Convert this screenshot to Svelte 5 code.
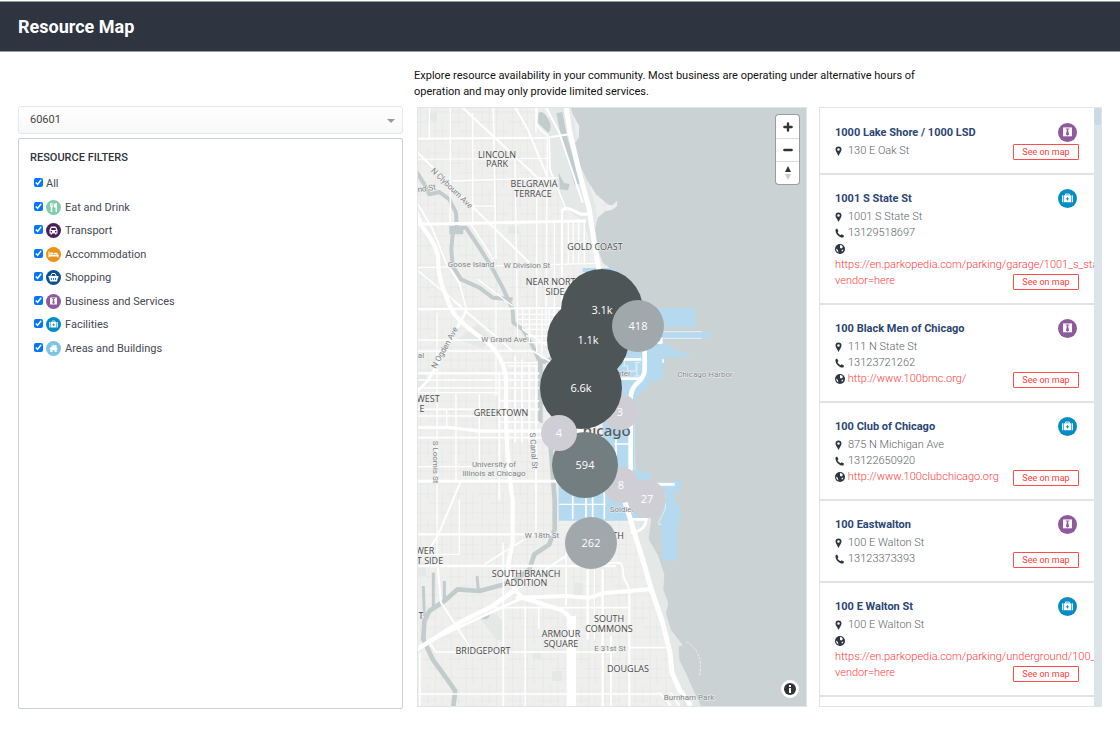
<script>
  let zip = $state('60601');

  let filters = $state([
    { name: 'All', checked: true },
    { name: 'Eat and Drink', icon: 'food', checked: true },
    { name: 'Transport', icon: 'transport', checked: true },
    { name: 'Accommodation', icon: 'bed', checked: true },
    { name: 'Shopping', icon: 'shopping', checked: true },
    { name: 'Business and Services', icon: 'business', checked: true },
    { name: 'Facilities', icon: 'facilities', checked: true },
    { name: 'Areas and Buildings', icon: 'areas', checked: true }
  ]);

  const iconColors = {
    food: '#7fcdaa',
    transport: '#4a1e5a',
    bed: '#ea9314',
    shopping: '#0c4f97',
    business: '#8d5a9b',
    facilities: '#068cc4',
    areas: '#7fc4e3'
  };

  const places = [
    { name: '1000 Lake Shore / 1000 LSD', icon: 'business', address: '130 E Oak St' },
    {
      name: '1001 S State St',
      icon: 'facilities',
      address: '1001 S State St',
      phone: '13129518697',
      url: 'https://en.parkopedia.com/parking/garage/1001_s_state_st?vendor=here'
    },
    {
      name: '100 Black Men of Chicago',
      icon: 'business',
      address: '111 N State St',
      phone: '13123721262',
      url: 'http://www.100bmc.org/'
    },
    {
      name: '100 Club of Chicago',
      icon: 'facilities',
      address: '875 N Michigan Ave',
      phone: '13122650920',
      url: 'http://www.100clubchicago.org'
    },
    { name: '100 Eastwalton', icon: 'business', address: '100 E Walton St', phone: '13123373393' },
    {
      name: '100 E Walton St',
      icon: 'facilities',
      address: '100 E Walton St',
      url: 'https://en.parkopedia.com/parking/underground/100_e_walton_st?vendor=here'
    }
  ];

  const clusters = [
    { x: 204, y: 306, r: 18, label: '3', color: '#cfced5' },
    { x: 205, y: 379, r: 18, label: '8', color: '#cfced5' },
    { x: 231, y: 393, r: 19, label: '27', color: '#cfced5' },
    { x: 186, y: 204, r: 41, label: '3.1k', color: '#4d5557' },
    { x: 172, y: 234, r: 41, label: '1.1k', color: '#4d5557' },
    { x: 165, y: 282, r: 41, label: '6.6k', color: '#4d5557' },
    { x: 222, y: 220, r: 26, label: '418', color: '#a1a8ab' },
    { x: 175, y: 437, r: 26, label: '262', color: '#a1a8ab' },
    { x: 169, y: 359, r: 33, label: '594', color: '#737e81' },
    { x: 143, y: 327, r: 18, label: '4', color: '#cfced5' }
  ];

  const areas = [
    [81, 52, 'LINCOLN'], [81, 61, 'PARK'],
    [118, 81, 'BELGRAVIA'], [117, 91, 'TERRACE'],
    [179, 144, 'GOLD COAST'],
    [138, 179, 'NEAR NORTH'], [139, 189, 'SIDE'],
    [12, 296, 'WEST'], [6, 306, 'E'],
    [85, 310, 'GREEKTOWN'],
    [9, 448, 'WER'], [14, 458, 'T SIDE'],
    [110, 471, 'SOUTH BRANCH'], [110, 480, 'ADDITION'],
    [5, 513, 'T'], [202, 433, 'TH'],
    [145, 531, 'ARMOUR'], [145, 541, 'SQUARE'],
    [193, 516, 'SOUTH'], [193, 526, 'COMMONS'],
    [67, 548, 'BRIDGEPORT'], [212, 566, 'DOUGLAS']
  ];

  // x, y, text, rotation
  const streets = [
    [34, 84, 'N Clybourn Ave', 44],
    [11, 85, 'nd St', -8],
    [55, 161, 'Goose Island', 0],
    [111, 162, 'W Division St', 0],
    [31, 243, 'N Ogden Ave', -61],
    [88, 236, 'W Grand Ave', 0],
    [5, 252, 'al', 0],
    [17, 356, 'S Loomis St', 90],
    [115, 345, 'S Canal St', 86],
    [78, 361, 'University of', 0],
    [78, 370, 'Illinois at Chicago', 0],
    [126, 432, 'W 18th St', 0],
    [194, 545, 'E 31st St', 0],
    [203, 270, 'Center', 0],
    [206, 406, 'Soldier', 0],
    [289, 271, 'Chicago Harbor', 0],
    [273, 594, 'Burnham Park', 0]
  ];

  // [width, path]
  const roads = [
    [6, 'M0 98L390 95L460 85'], [3, 'M0 160L400 157'], [4, 'M110 225L425 215'],
    [9, 'M0 355L510 345'], [4, 'M0 485L545 472'], [4, 'M170 300H240'],
    [4, 'M40 0V96'], [5, 'M103 0V353'], [4, 'M170 20V353'], [5, 'M232 0L240 460'],
    [4, 'M297 160L305 700'], [4, 'M360 0V80M362 215V740'], [4, 'M394 95L390 650'],
    [4, 'M415 350V620'], [6, 'M438 310V600'], [4, 'M457 350V475M472 350V475M488 350V475M505 350V475'],
    [6, 'M135 0L365 215L425 230'], [6, 'M0 135L340 470'],
    [6, 'M295 0L335 70L395 215'], [6, 'M388 0L430 80L500 290'], [5, 'M362 0V60L400 95L402 190L450 310'],
    [15, 'M450 0L462 80L490 200L520 310L530 380L548 490L570 600'],
    [9, 'M438 318Q440 302 465 310L495 325H520'],
    [13, 'M0 320L20 365Q70 425 66 470Q68 520 90 570Q100 600 115 625Q150 665 210 705Q265 755 270 820V950Q275 1080 290 1182V1310L276 1375Q285 1450 320 1475L430 1510Q465 1525 466 1560'],
    [5, 'M0 285L50 370L90 470L130 530L152 612'],
    [4, 'M0 490L135 600'], [5, 'M165 355L232 460'], [4, 'M185 520L290 600'],
    [8, 'M152 612L85 740L35 825L0 860'], [5, 'M110 582L290 735'],
    [6, 'M0 610L440 606'], [4, 'M240 582V870'], [5, 'M0 702H240'], [5, 'M0 735H350'],
    [7, 'M0 802H370'], [4, 'M0 822H370'], [5, 'M0 846H370'], [4, 'M0 860H250'],
    [5, 'M0 910H370'], [4, 'M0 930H270'], [10, 'M0 965L100 965L190 975H500'],
    [5, 'M0 995H400'], [4, 'M0 1082H270'], [9, 'M0 1126H560'],
    [4, 'M63 620V1380'], [4, 'M120 865V1125'], [4, 'M190 865V1125'], [4, 'M92 910V965'],
    [5, 'M250 800V1182M297 750V1010M318 760V1010M340 770V1010M360 780V1280'],
    [4, 'M250 770H365M275 780H365M250 885H370M250 948H370'],
    [4, 'M305 625H420M305 640H425M310 655H430M320 670H430M330 690H430M335 710H420'],
    [4, 'M320 610V670M340 610V710M378 610V750M400 610V750M415 610V750'],
    [5, 'M410 730L320 670M350 735L410 770'],
    [6, 'M135 1125L65 1290L30 1345'], [7, 'M0 1285H420'], [8, 'M0 1380H600'],
    [4, 'M0 1345H130V1182'], [5, 'M205 1375L325 1300'], [6, 'M450 1350L300 1450L200 1520'],
    [6, 'M65 1380L75 1490L160 1620'], [5, 'M262 1310V1800M328 1500V1800'],
    [14, 'M0 1632L130 1550L230 1500L300 1450'], [8, 'M30 1610L320 1475'],
    [12, 'M300 1475L450 1470L520 1475L560 1462L700 1450'],
    [5, 'M230 1505H640'], [5, 'M40 1610L60 1638H600M640 1625H760'],
    [5, 'M0 1764H730'], [28, 'M466 1530V1800'], [5, 'M12 1640V1800'],
    [5, 'M368 1500V1570M450 1340V1500'], [7, 'M515 1390V1600'], [4, 'M535 1390V1600'],
    [7, 'M560 1390V1800'], [6, 'M585 1590V1800'], [6, 'M570 1370H610Q622 1375 622 1410L640 1450V1800'],
    [5, 'M730 1760L765 1800M765 1760L790 1800'],
    [15, 'M625 1182L680 1360L706 1450L740 1550L762 1640L768 1700L790 1750L825 1800'],
    [8, 'M640 1240H695M690 1240Q690 1275 645 1280'],
    [14, 'M686 730V790Q686 815 660 835Q644 850 644 880V1085L625 1182'],
    [8, 'M600 760H676M600 818H676M736 695V710H715'],
    [5, 'M595 1014H644M600 1000V1050M741 760V770'],
    [9, 'M720 1135H776'],
    [5, 'M470 1120V1240M510 1120V1240M530 1120V1240M565 1120V1240'],
    [4, 'M430 1195H570']
  ];
</script>

{#snippet categoryIcon(kind)}
  <svg class="category" viewBox="0 0 30 30" aria-hidden="true">
    <circle cx="15" cy="15" r="15" fill={iconColors[kind]} />
    {#if kind === 'food'}
      <path fill="#fff" d="M8 6h1.500v6h1V6h1.500v6h1V6H14.500v7l-2 2v9h-3v-9L8 13zM16 9q0-3 6-3v18h-3v-9h-3z" />
    {:else if kind === 'transport'}
      <path fill="#fff" fill-rule="evenodd" d="M11 7h8l2 2 2 5v7h-2v2h-3v-2h-6v2H9v-2H7v-7l2-5zM11 10l-1 4h10l-1-4zM9 16v3h3v-3zM18 16v3h3v-3z" />
    {:else if kind === 'bed'}
      <path fill="#fff" d="M5 9h2v6H25v6h-2v-2H7v2H5zM8.500 11h4q2 0 2 3h-6zM15.500 11.500h5q3 0 3.500 2.500h-8.500z" />
    {:else if kind === 'shopping'}
      <path fill="none" stroke="#fff" stroke-width="2" d="M9 13L12 7h6l3 6" />
      <path fill="#fff" fill-rule="evenodd" d="M5 12h20v3h-1l-2 8H8l-2-8H5zM10 16v4h1.500v-4zM14 16v4h1.500v-4zM18 16v4h1.500v-4z" />
    {:else if kind === 'business'}
      <path fill="#fff" d="M8 7h14v14H8z" />
      <path fill={iconColors[kind]} d="M12 8.500h6v1.500h-1.500l-.5 2 1.500 6L15 20l-2.500-2L14 12l-.5-2H12z" />
    {:else if kind === 'facilities'}
      <path fill="none" stroke="#fff" stroke-width="1.500" d="M12 10V8h6v2" />
      <path fill="#fff" d="M6.500 10H8v11H6.500zM9 10h12v11H9zM22 10h1.500v11H22z" />
      <path stroke={iconColors[kind]} stroke-width="1.500" d="M15 13v5M12.500 15.500h5" />
    {:else}
      <path fill="#fff" d="M15 7l3 3V8h3v5l3 3h-2.500v6H17v-4h-4v4H8.500v-6H6z" />
    {/if}
  </svg>
{/snippet}

<header>
  <h1>Resource Map</h1>
</header>

<main>
  <p class="intro">
    Explore resource availability in your community. Most business are operating under alternative hours of operation and may only provide limited services.
  </p>

  <section class="sidebar">
    <div class="zip">
      <select bind:value={zip} aria-label="Zip code">
        <option>60601</option>
        <option>60602</option>
      </select>
    </div>
    <div class="filters">
      <h2>RESOURCE FILTERS</h2>
      <div class="filter-list">
        {#each filters as filter}
          <label>
            <input type="checkbox" bind:checked={filter.checked} />
            {#if filter.icon}{@render categoryIcon(filter.icon)}{/if}
            <span>{filter.name}</span>
          </label>
        {/each}
      </div>
    </div>
  </section>

  <section class="map" aria-label="Map">
    <svg class="layer" viewBox="6 6 1164 1794" preserveAspectRatio="xMinYMin slice" aria-hidden="true">
      <defs>
        <pattern id="blocks" width="92" height="124" patternUnits="userSpaceOnUse">
          <path fill="none" stroke="#e3e6e6" stroke-width="2" d="M14 0V124M36 0V62M58 0V124M78 40V124M0 18H92M0 48H58M36 76H92M0 104H92" />
        </pattern>
      </defs>
      <rect width="1180" height="1810" fill="#efefee" />
      <rect width="1180" height="1810" fill="url(#blocks)" />

      <!-- parks -->
      <g fill="#e4e8e7">
        <path d="M400 0H460L540 310L550 480L500 345L440 300L400 190Z" />
        <path d="M277 360h32v24h-32zM35 20h28v24H35zM125 700l60-45 50 50-40 20zM6 800l20 5 15 30-35 15zM190 1535l40-20 30 30v60l-20-5zM408 1695h30v30h-30zM350 1640h25v20h-25zM475 1430h25v40h-25zM0 1370h30v40H0z" />
        <path d="M640 1240L700 1235L705 1300L745 1410L770 1560L800 1620L830 1700L860 1800H800L760 1640L700 1430Z" />
      </g>

      <!-- lake -->
      <path fill="#cad2d3" d="M462 0L470 25L490 60L488 95L475 115L490 175L515 225L540 265L575 295L588 298L604 284L603 300Q590 315 570 314L545 335L538 370L545 430L560 470L600 500L640 560L655 700V850L658 1090L705 1242L698 1300L725 1347L745 1407L742 1452L757 1492L750 1522L765 1572L800 1617L788 1622L790 1662L810 1702L832 1752L860 1810H1180V0Z" />
      <path fill="none" stroke="#eef0f0" stroke-width="3" stroke-dasharray="8 4" d="M812 1608Q865 1640 850 1710" />

      <!-- river, lagoons and slips -->
      <g fill="none" stroke="#c3cccd" stroke-width="12" stroke-linejoin="round">
        <path d="M0 195L25 235L40 265L70 258L100 280L120 320L122 360L110 385L106 430L110 480L135 520L190 545L230 575L290 580" />
        <path d="M120 365H150L190 425L225 480L260 545L290 610L292 650L320 670L350 720L368 760L385 768L410 755" />
        <path stroke-width="14" d="M373 765V950M404 1020L416 1182V1270L400 1315L355 1345L340 1390L300 1420L255 1438L190 1455L125 1450L85 1485L40 1515L25 1545L22 1600L50 1660L90 1715L118 1755L112 1800" />
        <path stroke-width="9" d="M22 1440L25 1530M52 1400V1510M85 1425V1490M183 1410L187 1452" />
        <path stroke-width="18" d="M430 20L445 95L485 235" />
      </g>
      <path fill="#c3cccd" d="M100 360h42v25h-42zM368 20Q385 10 402 50Q406 75 396 80L365 50ZM428 200l15 30 18 5-5 18-24-3zM195 1530q15-12 27-2-6 16-27 10z" />

      <!-- highlighted zip area -->
      <g fill="#b5daf0">
        <path d="M500 486H600V498H500ZM428 1120V1244H655L700 1235L660 1182L700 1125Q712 1100 695 1097L656 1092V890Q665 890 660 870L690 850Q700 840 702 824H740L744 755L836 750L770 730V718H742V700H858V698L888 692V680L858 678H742V662H838V607H730L660 630L560 800V1120Z" />
        <path d="M720 1130H770L775 1122H792L795 1150L785 1160H770L778 1182L792 1205V1245L783 1260V1365L740 1362L738 1300L732 1260L745 1182Z" />
      </g>
      <path fill="#c5d8df" d="M773 1165l6 0-3 12 4 16-7-12z" />
      <path fill="none" stroke="#e7eff2" stroke-width="3" d="M742 677H858M742 697H858M620 780h15v15h25v-20M625 750v30M663 770v40M655 770h18M655 810h18M748 1164v45l-20 40v6h8" />

      <g fill="none" stroke-linejoin="round">
        {#each roads as [width, d]}
          <path {d} stroke="#fff" stroke-width={width} />
        {/each}
      </g>
    </svg>

    <svg class="layer" viewBox="2 2 388 598" preserveAspectRatio="xMinYMin slice">
      <g class="street">
        {#each streets as [x, y, text, angle]}
          <text {x} {y} transform="rotate({angle} {x} {y})">{text}</text>
        {/each}
      </g>
      <g class="area">
        {#each areas as [x, y, text]}
          <text {x} {y}>{text}</text>
        {/each}
      </g>
      <text class="city" x="186" y="330">Chicago</text>
      {#each clusters as c}
        <circle cx={c.x} cy={c.y} r={c.r} fill={c.color} />
      {/each}
      {#each clusters as c}
        <text class="count" x={c.x} y={c.y + 4}>{c.label}</text>
      {/each}
    </svg>

    <div class="zoom">
      <button aria-label="Zoom in">
        <svg viewBox="0 0 10 10"><path stroke="#333" stroke-width="2" stroke-linecap="round" d="M5 2v6M2 5h6" /></svg>
      </button>
      <button aria-label="Zoom out">
        <svg viewBox="0 0 10 10"><path stroke="#333" stroke-width="2" stroke-linecap="round" d="M2 5h6" /></svg>
      </button>
      <button aria-label="Reset bearing">
        <svg class="compass" viewBox="0 0 8 16"><path fill="#333" d="M4 1l3 6H1z" /><path fill="#ccc" d="M4 15l3-6H1z" /></svg>
      </button>
    </div>
    <button class="info" aria-label="Map attribution">
      <svg viewBox="0 0 12 12">
        <circle cx="6" cy="6" r="6" fill="#333" />
        <path fill="#fff" d="M5 2h2v2H5zM5 5h2v5H5z" />
      </svg>
    </button>
  </section>

  <section class="results">
    <div class="cards">
      {#each places as place}
        <article>
          <div class="title">
            <h3>{place.name}</h3>
            {@render categoryIcon(place.icon)}
          </div>
          <div class="line">
            <svg class="glyph" viewBox="0 0 10 12"><path fill="#2e3440" fill-rule="evenodd" d="M3.500 1.500a3 3 0 0 1 3 3C6.500 6.500 4.500 8.500 3.500 11C2.500 8.500 .5 6.500 .5 4.500A3 3 0 0 1 3.500 1.500zM3.500 3.200a1.300 1.300 0 1 0 0 2.600a1.300 1.300 0 1 0 0-2.600z" /></svg>
            <span>{place.address}</span>
          </div>
          {#if place.phone}
            <div class="line">
              <svg class="glyph" viewBox="0 0 10 12"><path fill="#2e3440" d="M.5 2.500L2 1.500L3.500 4L2.500 5.200Q3.500 7 5.500 8.200L6.500 7.300L9 8.500L8.500 10.200Q7.500 11 5.500 10.200Q1 8 .5 4z" /></svg>
              <span>{place.phone}</span>
            </div>
          {/if}
          {#if place.url}
            <div class="site">
              <svg class="glyph" viewBox="0 0 10 12"><circle cx="5" cy="6" r="5" fill="#2e3440" /><path fill="#fff" d="M5 2L7 2.500l1 1.500-1.500 1.500L5 5zM1 5.500l2 1.500v1L3.500 9.500Q1 8.500 1 5.500zM6.500 7l2-.5L7 9z" /></svg>
              <a href={place.url}>{place.url}</a>
            </div>
          {/if}
          <button class="see">See on map</button>
        </article>
      {/each}
    </div>
    <div class="track" aria-hidden="true"><div class="thumb"></div></div>
  </section>
</main>

<style>
  :global(body) {
    background: #fff;
    font-family: Roboto, "Liberation Sans", sans-serif;
    font-size: 11px;
    color: #2e3440;
  }

  header {
    display: flex;
    align-items: center;
    height: 51px;
    margin-top: 1px;
    padding: 0 18px;
    background: #2e3440;
    border-top: 1px solid #9599a0;
    border-bottom: 1px solid #9599a0;
    box-sizing: border-box;
  }
  h1 {
    margin: 0;
    font-size: 18px;
    font-weight: 700;
    color: #fff;
  }

  main {
    display: grid;
    grid-template-columns: 385fr 390fr 283fr;
    grid-template-rows: auto minmax(500px, calc(100vh - 126px));
    padding: 16px 18px 20px;
    column-gap: 13px;
    row-gap: 6px;
  }

  .intro {
    grid-column: 2 / 4;
    max-width: 530px;
    margin: 0 0 0 -2px;
    line-height: 16px;
    color: #111;
  }

  .sidebar {
    display: flex;
    flex-direction: column;
    gap: 4px;
    min-width: 0;
  }

  .zip {
    position: relative;
  }
  .zip::after {
    content: '';
    position: absolute;
    right: 8px;
    top: 13px;
    border: 4px solid transparent;
    border-top-color: #999;
    border-bottom: 0;
    pointer-events: none;
  }
  select {
    display: block;
    width: 100%;
    height: 28px;
    padding: 0 11px 2px;
    border: 1px solid #e4e7ee;
    border-radius: 3px;
    background: linear-gradient(#fff, #f8f8f8);
    appearance: none;
    font: inherit;
    color: #444;
  }

  .filters {
    flex: 1;
    padding: 11px;
    border: 1px solid #c8d1d5;
    border-radius: 2px;
  }
  h2 {
    margin: 0;
    font-size: 11px;
    line-height: 16px;
    font-weight: 500;
  }

  .filter-list {
    display: grid;
    grid-auto-rows: 1fr;
    height: 188px;
    margin-top: 6px;
    padding-left: 4px;
  }
  label {
    display: flex;
    align-items: center;
    gap: 3px;
    color: #454a54;
  }
  label input {
    width: 9px;
    height: 9px;
    margin: 0 0 2px;
  }
  label .category {
    width: 15px;
    height: 15px;
    margin-right: 1px;
  }

  .map {
    position: relative;
    margin: 1px -1px 2px 1px;
    border: 1px solid #e1e5e9;
    background: #cad2d3;
    overflow: hidden;
  }
  .layer {
    position: absolute;
    width: 100%;
    height: 100%;
  }
  .layer text {
    text-anchor: middle;
  }
  .area text {
    font-family: "Open Sans", sans-serif;
    font-size: 9px;
    font-weight: 500;
    fill: #4b4b4b;
    paint-order: stroke;
    stroke: #f2f2f2;
    stroke-width: 1px;
  }
  .street text {
    font-size: 8px;
    fill: #7f8587;
    paint-order: stroke;
    stroke: #f2f2f2;
    stroke-width: 1px;
  }
  .layer .city {
    font-family: "Noto Sans", sans-serif;
    font-size: 15px;
    font-weight: 500;
    fill: #5c5c5c;
  }
  .layer .count {
    font-family: "Open Sans", sans-serif;
    font-size: 11px;
    fill: #fff;
  }

  .zoom {
    position: absolute;
    top: 7px;
    right: 7px;
    width: 23px;
    border-radius: 3px;
    background: #fff;
    box-shadow: 0 0 0 1px #979fa1;
    overflow: hidden;
  }
  .zoom button {
    display: flex;
    align-items: center;
    justify-content: center;
    width: 100%;
    height: 23px;
    padding: 0;
    border: 0;
    background: none;
  }
  .zoom button + button {
    border-top: 1px solid #ddd;
  }
  .zoom svg {
    width: 12px;
    height: 12px;
  }
  .zoom .compass {
    width: 8px;
    height: 16px;
  }
  .info {
    position: absolute;
    right: 7px;
    bottom: 8px;
    display: flex;
    align-items: center;
    justify-content: center;
    width: 18px;
    height: 18px;
    padding: 0;
    border: 0;
    border-radius: 50%;
    background: #fff;
  }
  .info svg {
    width: 12px;
    height: 12px;
    flex-shrink: 0;
  }

  .results {
    display: flex;
    min-width: 0;
    margin: 1px 0 2px;
    border: 1px solid #e3e3e3;
    overflow: hidden;
  }
  .cards {
    flex: 1;
    min-width: 0;
    padding-top: 1px;
    overflow: auto;
    overflow-x: hidden;
    scrollbar-width: none;
  }
  .track {
    width: 7px;
    background: #dbe4eb;
  }
  .thumb {
    height: 17px;
    border-radius: 3px;
    background: #c9d9e6;
  }

  article {
    position: relative;
    padding: 13px 15px 14px;
    border-bottom: 2px solid #e3e3e3;
  }
  .title {
    display: flex;
    align-items: center;
    justify-content: space-between;
    height: 21px;
  }
  .title .category {
    width: 19px;
    height: 19px;
    margin-right: 2px;
  }
  h3 {
    margin: 0;
    font-size: 11px;
    font-weight: 700;
    color: #2c4674;
  }
  .line,
  .site {
    line-height: 16px;
    font-weight: 300;
    color: #5c6567;
  }
  .line {
    display: flex;
    align-items: center;
    gap: 3px;
  }
  .glyph {
    width: 10px;
    height: 12px;
    vertical-align: middle;
  }
  a {
    color: #ff3b3b;
    text-decoration: none;
  }

  .see {
    position: absolute;
    right: 15px;
    bottom: 13px;
    width: 66px;
    height: 16px;
    padding: 0;
    border: 1px solid #ff4d4d;
    border-radius: 1px;
    background: #fff;
    font-family: inherit;
    font-size: 9px;
    color: #ff3b3b;
  }
</style>
